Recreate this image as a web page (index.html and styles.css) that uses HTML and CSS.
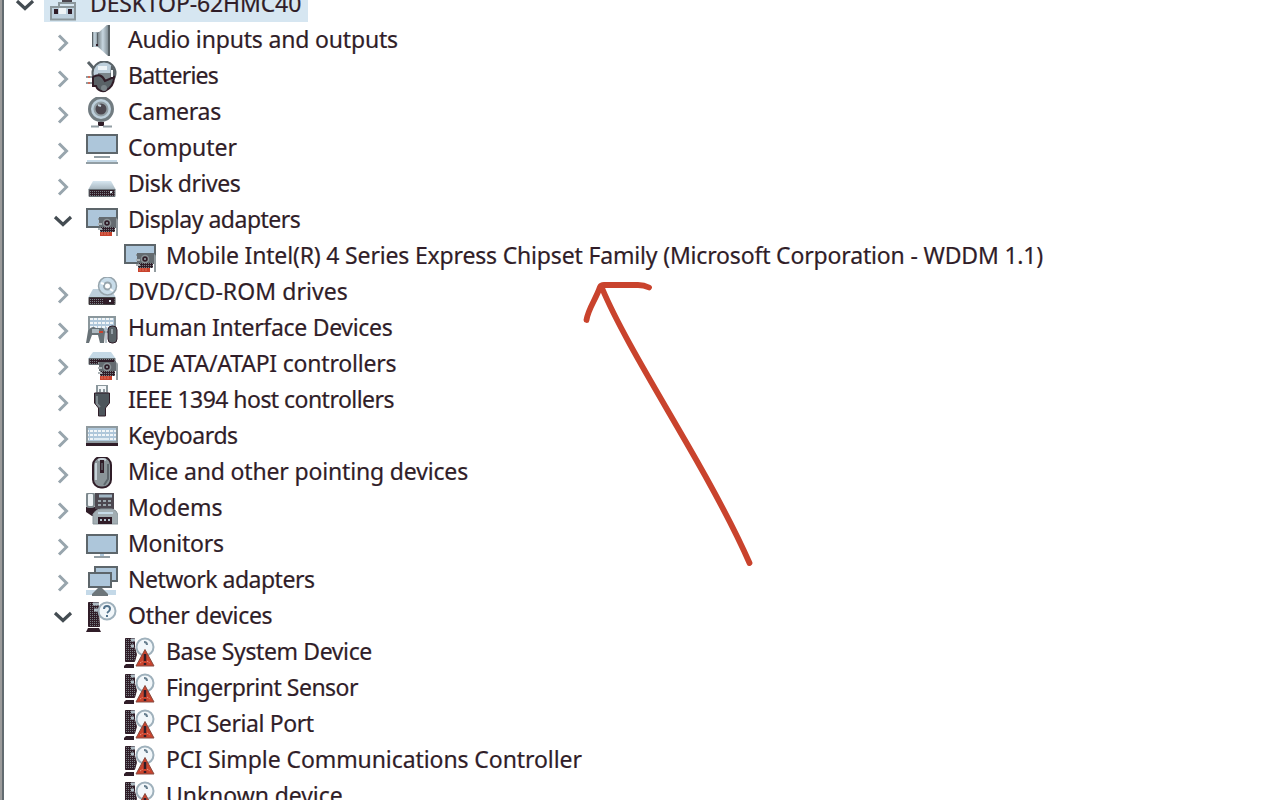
FILE: index.html
```html
<!DOCTYPE html>
<html lang="en">
<head>
<meta charset="utf-8">
<title>Device Manager</title>
<link rel="stylesheet" href="styles.css">
</head>
<body>
<svg class="defs" aria-hidden="true">
  <defs>
    <linearGradient id="metal" x2="1"><stop stop-color="#7d888d"/><stop offset=".4" stop-color="#c6d6e0"/><stop offset="1" stop-color="#69747a"/></linearGradient>
    <linearGradient id="silver" x2="0" y2="1"><stop stop-color="#d7e7f1"/><stop offset="1" stop-color="#a3b2bb"/></linearGradient>
    <pattern id="grain" width="2" height="2" patternUnits="userSpaceOnUse"><path fill="#301d28" d="M0 0h2v2H0z"/><path fill="#777f83" d="M0 0h1v1H0z"/></pattern>
    <pattern id="keys" width="4" height="4" patternUnits="userSpaceOnUse"><path fill="#afc7da" d="M0 0h4v4H0z"/><path fill="#f2f6f8" d="M0 1h3v2H0z"/></pattern>
  </defs>
  <symbol id="right" viewBox="0 0 12 18"><path d="M2 1.5 9.5 9 2 16.5" fill="none" stroke="#98a5ad" stroke-width="3"/></symbol>
  <symbol id="down" viewBox="0 0 20 12"><path d="m2 2 8 7.5L18 2" fill="none" stroke="#444c52" stroke-width="3.2"/></symbol>
  <symbol id="root" viewBox="0 0 32 32"><path fill="#4b454d" d="M14 9h10v5H14z"/><path d="M11 17v-3h16v3" fill="none" stroke="#8b979c" stroke-width="2"/><path fill="#bdd0dd" stroke="#8b979c" stroke-width="2" d="M3 18h24v12.500H3z"/><path fill="#301d28" d="M6 20h4v5H6zm14 0h4v5h-4z"/><path fill="#eef4f7" d="M11 19h7v6h-7z"/></symbol>
  <symbol id="audio" viewBox="0 0 32 32"><path fill="url(#metal)" d="M6 7h7v15H6z"/><path fill="url(#metal)" d="M12 8 22-1h2v32h-2l-10-9z"/><path fill="#596267" d="M22-1h2v32h-2zM6 7h1v15H6zM11 8h1v13h-1z"/><path fill="#301d28" d="M10 19h2v2h-2z"/></symbol>
  <symbol id="battery" viewBox="0 0 32 32"><path d="m2 1 8 9" stroke="#596267" stroke-width="3"/><circle cx="18" cy="12" r="11.5" fill="#bdcfdb" stroke="#596267" stroke-width="2"/><path fill="#eef4f7" d="M12 5h9v4h-9z"/><path fill="#7a8489" d="M12 12h14v7H12z"/><path fill="#596267" d="M25 4c6 5 5 14-1 17z"/><path d="M0 16h8M0 22h8" stroke="#929b9f" stroke-width="2"/><path d="M2 16h2m-2 6h2" stroke="#cf6b58" stroke-width="2"/><path fill="#596267" stroke="#301d28" stroke-width="2" d="M7 16q8-5 12 4l9-4q0 10-9 14-7 1-9-5H7z"/><circle cx="18" cy="27" r="3" fill="#7a8489"/><path d="M26 9v7" stroke="#f5f8fa" stroke-width="2"/></symbol>
  <symbol id="camera" viewBox="0 0 32 32"><circle cx="15" cy="12" r="11.5" fill="#bdcfdb" stroke="#727c81" stroke-width="3"/><circle cx="15" cy="12" r="6.5" fill="#4d4850" stroke="#929ea4" stroke-width="2"/><path d="m12 8 3 1" stroke="#c5d5df" stroke-width="2"/><path fill="#301d28" d="M12 25h6v4h-6z"/><path d="M5 29.5h8m4 0h9" stroke="#929ea4" stroke-width="2"/></symbol>
  <symbol id="computer" viewBox="0 0 32 32"><path fill="#adc6da" stroke="#5d666b" stroke-width="2" d="M1 2h30v18H1z"/><path d="M8 24h16" stroke="#929ea4" stroke-width="2"/><path d="M1 28h30" stroke="#c4d8e6" stroke-width="2"/><path d="M0 30h32" stroke="#929ea4" stroke-width="2"/></symbol>
  <symbol id="disk" viewBox="0 0 32 32"><path fill="url(#silver)" d="m7 12h18l5 9H2z"/><path fill="url(#grain)" stroke="#687277" d="M3 20.500h26v7H3z"/><path fill="#dce6ec" d="M24 22h2v2h-2z"/></symbol>
  <symbol id="card" viewBox="0 0 32 32"><path d="M12 14h17q2 0 2 2v15" fill="none" stroke="#929b9f" stroke-width="2"/><path fill="#646b70" d="M13 12h17v10H13z"/><path fill="url(#grain)" d="M14 22h15v5H14z"/><path d="M12 19h4M12 24h4" stroke="#aab2b5" stroke-width="2"/><circle cx="21" cy="18" r="3.500" fill="#301d28" stroke="#8b9498" stroke-width="1.5"/><path fill="#7e8589" d="M20 17h2v2h-2z"/><path fill="#c9432d" d="M14 27h12v4H14z"/><path d="M16 27v3m3-3v3m3-3v3" stroke="#e8a294" stroke-width=".5"/></symbol>
  <symbol id="display" viewBox="0 0 32 32"><path fill="#adc6da" stroke="#5d666b" stroke-width="2" d="M1 4h30v18H1z"/><use href="#card"/></symbol>
  <symbol id="dvd" viewBox="0 0 32 32"><path fill="#bdcfdb" d="M7 12h18l5 9H2z"/><circle cx="21.5" cy="9" r="9" fill="#c8dce9" stroke="#96a4ac" stroke-width="1.5"/><circle cx="21.5" cy="9" r="3.5" fill="#fff" stroke="#96a4ac" stroke-width="2"/><path d="m15 6 3 1m6 5 3 2" stroke="#fff" stroke-width="2"/><path fill="url(#grain)" stroke="#444" d="M3 20.500h26v7H3z"/><path fill="#301d28" d="M18 21h10v6H18z"/><path fill="#dce6ec" d="M23 23h2v2h-2z"/></symbol>
  <symbol id="hid" viewBox="0 0 32 32"><path fill="url(#keys)" stroke="#8b979c" stroke-width="2" d="M3 4h26v15H3z"/><path fill="#687277" d="M0 30 2 18q4-6 8-3h4q4-1 5 4l-1 11h-4l-2-8H6l-3 8z"/><path fill="#adb9c0" d="M6 16h7v4H6z"/><path d="M13 19h4" stroke="#c9432d" stroke-width="2"/><rect x="22" y="13" width="9" height="17" rx="4" fill="#596267" stroke="#301d28"/><path d="M20 14v16m6-14v5" stroke="#aab7bf" stroke-width="1.5"/></symbol>
  <symbol id="ide" viewBox="0 0 32 32"><path fill="#c5d9e6" d="M7 3h18l5 7H2z"/><path fill="url(#grain)" stroke="#687277" d="M3 9.500h26v6H3z"/><use href="#card"/><path fill="#301d28" d="M12 11h16v2H12z"/></symbol>
  <symbol id="ieee" viewBox="0 0 32 32"><path fill="#f2f5f7" stroke="#8b979c" stroke-width="2" d="M11 0h10v8H11z"/><path d="M14 4v4m4-4v4" stroke="#8b979c" stroke-width="2"/><path fill="#4d565c" stroke="#301d28" d="M8.500 8h15v10l-4 5v8h-7v-8l-4-5z"/><path d="M11 11v8l3 3" fill="none" stroke="#7f898e" stroke-width="2"/></symbol>
  <symbol id="keyboard" viewBox="0 0 32 32"><path fill="url(#keys)" stroke="#8f9a9f" stroke-width="2" d="M1 6h30v15H1z"/><path d="M8 18h15" stroke="#e2edf4" stroke-width="2"/><path fill="#301d28" d="M0 22h32v3H0z"/></symbol>
  <symbol id="mouse" viewBox="0 0 32 32"><rect x="7" y="0" width="18" height="30.500" rx="8" fill="#8b9599" stroke="#301d28" stroke-width="2"/><path d="M10 6v17m2-20q4-2 8 0" fill="none" stroke="#c7d2d9" stroke-width="2"/><path d="M16 3v13" stroke="#301d28" stroke-width="4"/><path d="M16 6v7" stroke="#7d878b"/><path d="M22 7v15l-4 6" fill="none" stroke="#5d666b" stroke-width="2"/></symbol>
  <symbol id="modem" viewBox="0 0 32 32"><path fill="#301d28" d="M0 14h12v9H6l-6-4z"/><path fill="#4d4850" d="M9-1h19v17H9z"/><rect x="1" y="0" width="7" height="14" rx="2" fill="#edf2f5" stroke="#7d888d" stroke-width="2"/><path d="M13 3h13" stroke="#a2b7c5" stroke-width="3"/><path d="M12 8h14m-14 4h14" stroke="#9aa6ac" stroke-width="2" stroke-dasharray="3 2"/><path fill="#a2adb2" stroke="#8b979c" d="M7 31V21q3-5 8-5h11q5 1 6 6v9z"/><path d="M12 20h15" stroke="#c6dae7" stroke-width="2"/><path fill="#301d28" d="M12 24h14v7H12z"/><path d="M14 27h2m2 0h2m2 0h2" stroke="#aebfc9" stroke-width="2"/></symbol>
  <symbol id="monitor" viewBox="0 0 32 32"><path fill="#adc6da" stroke="#5d666b" stroke-width="2" d="M1 6h30v18H1z"/><path d="M16 25v3" stroke="#adc6da" stroke-width="4"/><path d="M8 28h16" stroke="#929ea4" stroke-width="2"/></symbol>
  <symbol id="network" viewBox="0 0 32 32"><path fill="#adc6da" stroke="#5d666b" stroke-width="2" d="M9 2h22v14H9z"/><path fill="#adc6da" stroke="#5d666b" stroke-width="2" d="M3 8h22v14H3z"/><path fill="#c4d9e8" d="M0 25h30v5H0z"/><path fill="#6c767b" d="m12 23h4l6 6v2H6v-2z"/></symbol>
  <symbol id="tower" viewBox="0 0 32 32"><path fill="url(#grain)" stroke="#301d28" d="M2.500 1.500h10v10l1 14h-11z"/><path d="M7 3h6m-5 6h5" stroke="#aebcc4" stroke-width="3"/><path fill="#301d28" d="M2 27h11l2 4H0z"/><circle cx="21" cy="10" r="8.5" fill="#f2f7fa" stroke="#9fb1bc" stroke-width="2"/></symbol>
  <symbol id="other" viewBox="0 0 32 32"><use href="#tower"/><path d="M18 8q0-3 3-3t3 3q0 2-3 4m0 2v2" fill="none" stroke="#52738c" stroke-width="2"/></symbol>
  <symbol id="warn" viewBox="0 0 32 32"><path fill="url(#grain)" stroke="#301d28" d="M1.500 1.500h9v9l2 7-2 7h-9z"/><path d="M7 3h4m-4 6h3" stroke="#aebcc4" stroke-width="3"/><path fill="#301d28" d="M2 27h8v4H0v-2z"/><circle cx="21" cy="10" r="8.5" fill="#f2f7fa" stroke="#9fb1bc" stroke-width="2"/><path d="M20 5q3 0 3 3" fill="none" stroke="#687f8f" stroke-width="2"/><path fill="#c9432d" stroke="#874b40" d="m21 12.500 9 16.500H12z"/><path d="M21 17v7m0 2v2" stroke="#301d28" stroke-width="2.5"/><path d="m16 26 3-2m4 0 3 2" stroke="#e9a99c" stroke-dasharray="1 1"/></symbol>
</svg>
<main class="window">
  <ul class="tree">
    <li class="row row-root"><svg class="chev-down"><use href="#down"/></svg><span class="selected"><svg class="icon"><use href="#root"/></svg><span class="label">DESKTOP-62HMC40</span></span></li>
    <li class="row"><svg class="chev"><use href="#right"/></svg><svg class="icon"><use href="#audio"/></svg><span class="label">Audio inputs and outputs</span></li>
    <li class="row"><svg class="chev"><use href="#right"/></svg><svg class="icon"><use href="#battery"/></svg><span class="label">Batteries</span></li>
    <li class="row"><svg class="chev"><use href="#right"/></svg><svg class="icon"><use href="#camera"/></svg><span class="label">Cameras</span></li>
    <li class="row"><svg class="chev"><use href="#right"/></svg><svg class="icon"><use href="#computer"/></svg><span class="label">Computer</span></li>
    <li class="row"><svg class="chev"><use href="#right"/></svg><svg class="icon"><use href="#disk"/></svg><span class="label">Disk drives</span></li>
    <li class="row"><svg class="chev-down"><use href="#down"/></svg><svg class="icon"><use href="#display"/></svg><span class="label">Display adapters</span></li>
    <li class="row row-child"><svg class="icon"><use href="#display"/></svg><span class="label">Mobile Intel(R) 4 Series Express Chipset Family (Microsoft Corporation - WDDM 1.1)</span></li>
    <li class="row"><svg class="chev"><use href="#right"/></svg><svg class="icon"><use href="#dvd"/></svg><span class="label">DVD/CD-ROM drives</span></li>
    <li class="row"><svg class="chev"><use href="#right"/></svg><svg class="icon"><use href="#hid"/></svg><span class="label">Human Interface Devices</span></li>
    <li class="row"><svg class="chev"><use href="#right"/></svg><svg class="icon"><use href="#ide"/></svg><span class="label">IDE ATA/ATAPI controllers</span></li>
    <li class="row"><svg class="chev"><use href="#right"/></svg><svg class="icon"><use href="#ieee"/></svg><span class="label">IEEE 1394 host controllers</span></li>
    <li class="row"><svg class="chev"><use href="#right"/></svg><svg class="icon"><use href="#keyboard"/></svg><span class="label">Keyboards</span></li>
    <li class="row"><svg class="chev"><use href="#right"/></svg><svg class="icon"><use href="#mouse"/></svg><span class="label">Mice and other pointing devices</span></li>
    <li class="row"><svg class="chev"><use href="#right"/></svg><svg class="icon"><use href="#modem"/></svg><span class="label">Modems</span></li>
    <li class="row"><svg class="chev"><use href="#right"/></svg><svg class="icon"><use href="#monitor"/></svg><span class="label">Monitors</span></li>
    <li class="row"><svg class="chev"><use href="#right"/></svg><svg class="icon"><use href="#network"/></svg><span class="label">Network adapters</span></li>
    <li class="row"><svg class="chev-down"><use href="#down"/></svg><svg class="icon"><use href="#other"/></svg><span class="label">Other devices</span></li>
    <li class="row row-child"><svg class="icon"><use href="#warn"/></svg><span class="label">Base System Device</span></li>
    <li class="row row-child"><svg class="icon"><use href="#warn"/></svg><span class="label">Fingerprint Sensor</span></li>
    <li class="row row-child"><svg class="icon"><use href="#warn"/></svg><span class="label">PCI Serial Port</span></li>
    <li class="row row-child"><svg class="icon"><use href="#warn"/></svg><span class="label">PCI Simple Communications Controller</span></li>
    <li class="row row-child"><svg class="icon"><use href="#warn"/></svg><span class="label">Unknown device</span></li>
  </ul>
  <svg class="arrow" viewBox="0 0 1280 800"><path d="M749.500 563C735 530 708 480 686 442C655 388 619 329 602 288M586.500 320C588 309 596 299 600 287Q601 285 604 285H638Q644 285 649 287.500"/></svg>
</main>
</body>
</html>
```
FILE: styles.css
```css
* { box-sizing: border-box; }
body { margin: 0; background: #fff; }
.defs { position: absolute; width: 0; height: 0; }
.window {
  position: relative;
  width: 1280px;
  height: 800px;
  overflow: hidden;
  border-left: 2px solid #9b9b9b;
  box-shadow: inset 2px 0 #626b70;
}
.tree { list-style: none; margin: -13px 0 0; padding: 0; }
.row { display: flex; height: 36px; padding-left: 52px; }
.row-child { padding-left: 122px; }
.row-root { padding-left: 14px; }
.chev, .chev-down, .icon { flex: none; overflow: visible; }
.chev { width: 12px; height: 18px; margin: 11px 17px 0 3px; }
.chev-down { width: 20px; height: 12px; margin: 12px 12px 0 -1px; }
.row-root .chev-down { margin-right: 9px; }
.icon { width: 32px; height: 32px; margin-top: 2px; }
.row .chev-down + .icon { margin-left: 1px; }
.selected { display: flex; height: 35px; width: 264px; padding-left: 4px; background: #d6e6f1; }
.label {
  margin-left: 10px;
  font: 23px/32px "Noto Sans", "Open Sans", sans-serif;
  color: #301d28;
  white-space: nowrap;
  -webkit-text-stroke: .2px #301d28;
}

/* Tracking per label */
.row:nth-child(1) { letter-spacing: -.13px; }
.row:nth-child(2) { letter-spacing: -.17px; }
.row:nth-child(3) { letter-spacing: -.75px; }
.row:nth-child(4) { letter-spacing: -.28px; }
.row:nth-child(6) { letter-spacing: -.45px; }
.row:nth-child(7) { letter-spacing: -.5px; }
.row:nth-child(8) { letter-spacing: -.17px; }
.row:nth-child(9) { letter-spacing: .06px; }
.row:nth-child(10) { letter-spacing: -.3px; }
.row:nth-child(11) { letter-spacing: -.2px; }
.row:nth-child(12) { letter-spacing: -.54px; }
.row:nth-child(13) { letter-spacing: -.44px; }
.row:nth-child(14) { letter-spacing: -.16px; }
.row:nth-child(16) { letter-spacing: -.25px; }
.row:nth-child(17) { letter-spacing: -.5px; }
.row:nth-child(18) { letter-spacing: -.3px; }
.row:nth-child(19) { letter-spacing: -.39px; }
.row:nth-child(20) { letter-spacing: -.5px; }
.row:nth-child(21) { letter-spacing: -.4px; }
.row:nth-child(22) { letter-spacing: -.08px; }
.row:nth-child(23) { letter-spacing: -.07px; }

.arrow { position: absolute; top: 0; left: -2px; width: 1280px; height: 800px; fill: none; stroke: #c9432d; stroke-width: 5.8; stroke-linecap: round; stroke-linejoin: round; }
```
